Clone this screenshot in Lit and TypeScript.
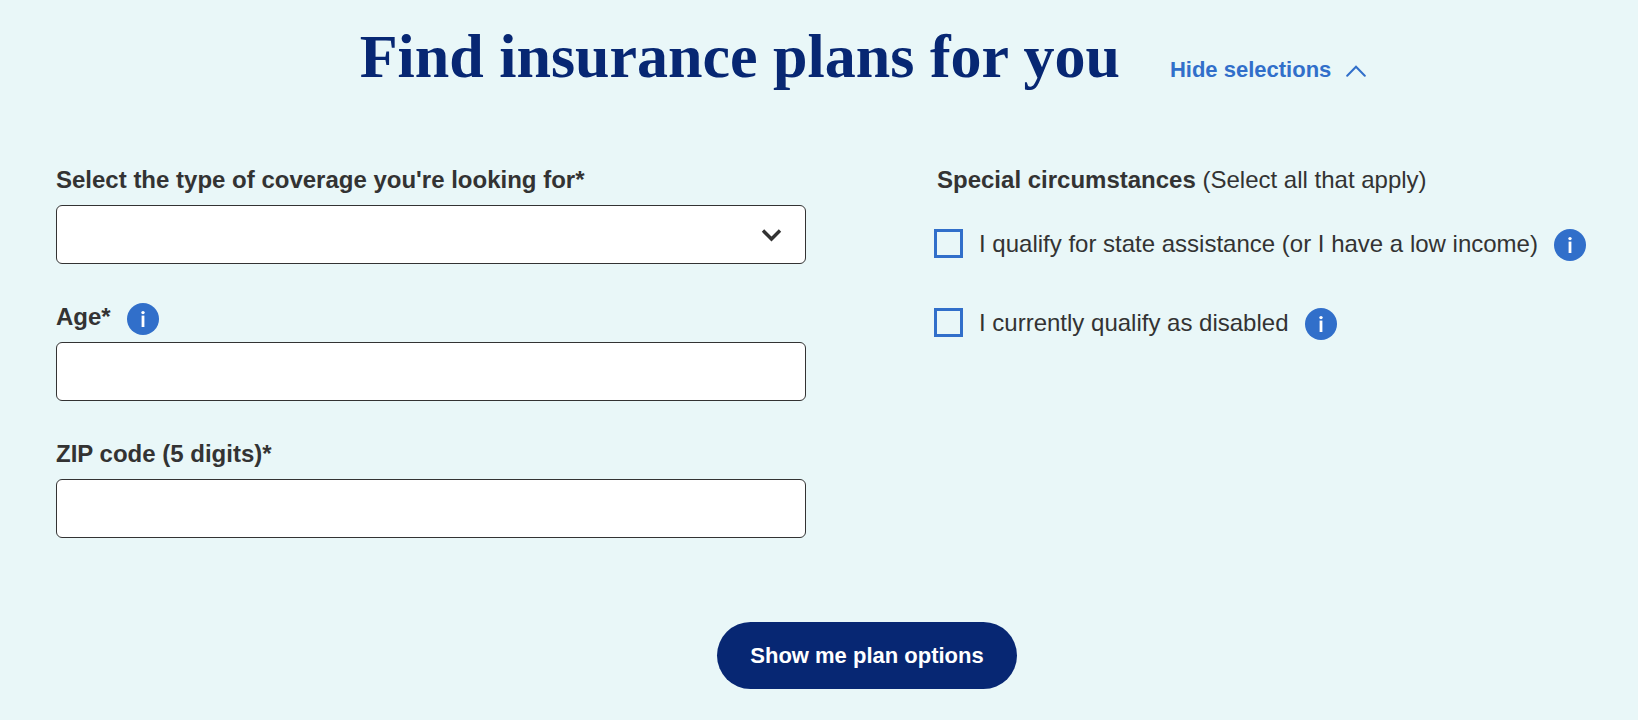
import { LitElement, html, css, nothing } from "lit";
import { customElement, property, state } from "lit/decorators.js";

@customElement("info-button")
class InfoButton extends LitElement {
  @property() label = "";

  static styles = css`
    :host {
      display: inline-flex;
      flex: none;
    }
    .info {
      display: block;
      width: 32px;
      height: 32px;
      padding: 0;
      border: 0;
      border-radius: 50%;
      background: #316fca;
      cursor: pointer;
    }
    .glyph {
      display: block;
    }
  `;

  render() {
    return html`
      <button class="info" type="button" aria-label=${this.label}>
        <svg class="glyph" width="32" height="32" viewBox="0 0 32 32" aria-hidden="true">
          <circle cx="16" cy="9.6" r="1.7" fill="#fff" />
          <rect x="14.6" y="12.6" width="2.8" height="11.4" fill="#fff" />
        </svg>
      </button>
    `;
  }
}

@customElement("app-root")
class AppRoot extends LitElement {
  @state() private open = true;

  static styles = css`
    :host {
      display: block;
      box-sizing: border-box;
      min-height: 100vh;
      padding: 20px 8px 31px 56px;
      background: #e9f7f8;
      color: #333;
      font-family: "Liberation Sans", Arial, sans-serif;
      font-size: 24px;
      line-height: 28px;
    }
    .header {
      display: flex;
      flex-wrap: wrap;
      align-items: baseline;
      justify-content: center;
      column-gap: 50px;
      padding-left: 40px;
      margin-bottom: 74px;
    }
    .title {
      margin: 0;
      color: #072773;
      font-family: "Liberation Serif", "Times New Roman", serif;
      font-size: 62px;
      font-weight: 700;
      line-height: 72px;
    }
    .toggle {
      display: inline-flex;
      align-items: center;
      gap: 15px;
      padding: 0;
      border: 0;
      background: none;
      color: #316fca;
      font: inherit;
      font-size: 22px;
      font-weight: 700;
      cursor: pointer;
    }
    .toggle-icon {
      margin-top: 2px;
    }
    .columns {
      display: grid;
      grid-template-columns: minmax(0, 1fr) minmax(0, 1fr);
      gap: 74px;
    }
    .fields {
      display: flex;
      flex-direction: column;
      gap: 39px;
    }
    .field {
      display: flex;
      flex-direction: column;
      gap: 11px;
    }
    .label-row {
      display: flex;
      align-items: flex-start;
      gap: 16px;
      height: 28px;
    }
    .label {
      font-weight: 700;
    }
    .control {
      display: block;
      box-sizing: border-box;
      width: 100%;
      height: 59px;
      margin: 0;
      padding: 0 16px;
      border: 1px solid #333;
      border-radius: 6px;
      background: #fff;
      color: #333;
      font: inherit;
      appearance: none;
    }
    .select-wrap {
      display: grid;
      align-items: center;
    }
    .select-wrap > * {
      grid-area: 1 / 1;
    }
    .select-icon {
      justify-self: end;
      margin-right: 24px;
      pointer-events: none;
    }
    .circumstances {
      min-width: 0;
      margin: 0;
      padding: 0 0 0 54px;
      border: 0;
    }
    .legend {
      margin-bottom: 35px;
      padding: 0 0 0 3px;
    }
    .options {
      display: flex;
      flex-direction: column;
      gap: 47px;
    }
    .option {
      display: flex;
      align-items: flex-start;
      gap: 16px;
    }
    .check {
      flex: none;
      width: 29px;
      height: 29px;
      margin: 0;
      border: 3px solid #316fca;
      background: transparent;
      appearance: none;
      cursor: pointer;
    }
    .check:checked {
      background: #316fca;
    }
    .option-label {
      line-height: 30px;
    }
    .actions {
      display: flex;
      justify-content: center;
      padding-left: 48px;
      margin-top: 84px;
    }
    .submit {
      height: 67px;
      padding: 0 33px;
      border: 0;
      border-radius: 34px;
      background: #072773;
      color: #fff;
      font: inherit;
      font-size: 22px;
      font-weight: 700;
      cursor: pointer;
    }
  `;

  private renderForm() {
    return html`
      <form @submit=${(e: Event) => e.preventDefault()}>
        <div class="columns">
          <div class="fields">
            <div class="field">
              <div class="label-row">
                <label class="label" for="coverage">Select the type of coverage you're looking for*</label>
              </div>
              <div class="select-wrap">
                <select class="control" id="coverage">
                  <option value="" selected></option>
                </select>
                <svg class="select-icon" width="21" height="14" viewBox="0 0 21 14" aria-hidden="true">
                  <path d="M2 2.5 10.5 11 19 2.5" fill="none" stroke="#333" stroke-width="3.4" />
                </svg>
              </div>
            </div>
            <div class="field">
              <div class="label-row">
                <label class="label" for="age">Age*</label>
                <info-button label="About age"></info-button>
              </div>
              <input class="control" id="age" type="text" inputmode="numeric" />
            </div>
            <div class="field">
              <div class="label-row">
                <label class="label" for="zip">ZIP code (5 digits)*</label>
              </div>
              <input class="control" id="zip" type="text" inputmode="numeric" maxlength="5" />
            </div>
          </div>
          <fieldset class="circumstances">
            <legend class="legend"><strong>Special circumstances</strong> (Select all that apply)</legend>
            <div class="options">
              <div class="option">
                <input class="check" id="assistance" type="checkbox" />
                <label class="option-label" for="assistance">I qualify for state assistance (or I have a low income)</label>
                <info-button label="About state assistance"></info-button>
              </div>
              <div class="option">
                <input class="check" id="disabled" type="checkbox" />
                <label class="option-label" for="disabled">I currently qualify as disabled</label>
                <info-button label="About disability"></info-button>
              </div>
            </div>
          </fieldset>
        </div>
        <div class="actions">
          <button class="submit" type="submit">Show me plan options</button>
        </div>
      </form>
    `;
  }

  render() {
    return html`
      <header class="header">
        <h1 class="title">Find insurance plans for you</h1>
        <button
          class="toggle"
          type="button"
          aria-expanded=${this.open ? "true" : "false"}
          @click=${() => (this.open = !this.open)}
        >
          <span>${this.open ? "Hide" : "Show"} selections</span>
          <svg class="toggle-icon" width="20" height="12" viewBox="0 0 20 12" aria-hidden="true">
            <path
              d=${this.open ? "M1.2 10.8 10 1.8 18.8 10.8" : "M1.2 1.2 10 10.2 18.8 1.2"}
              fill="none"
              stroke="#316fca"
              stroke-width="2"
              stroke-linecap="round"
            />
          </svg>
        </button>
      </header>
      ${this.open ? this.renderForm() : nothing}
    `;
  }
}
